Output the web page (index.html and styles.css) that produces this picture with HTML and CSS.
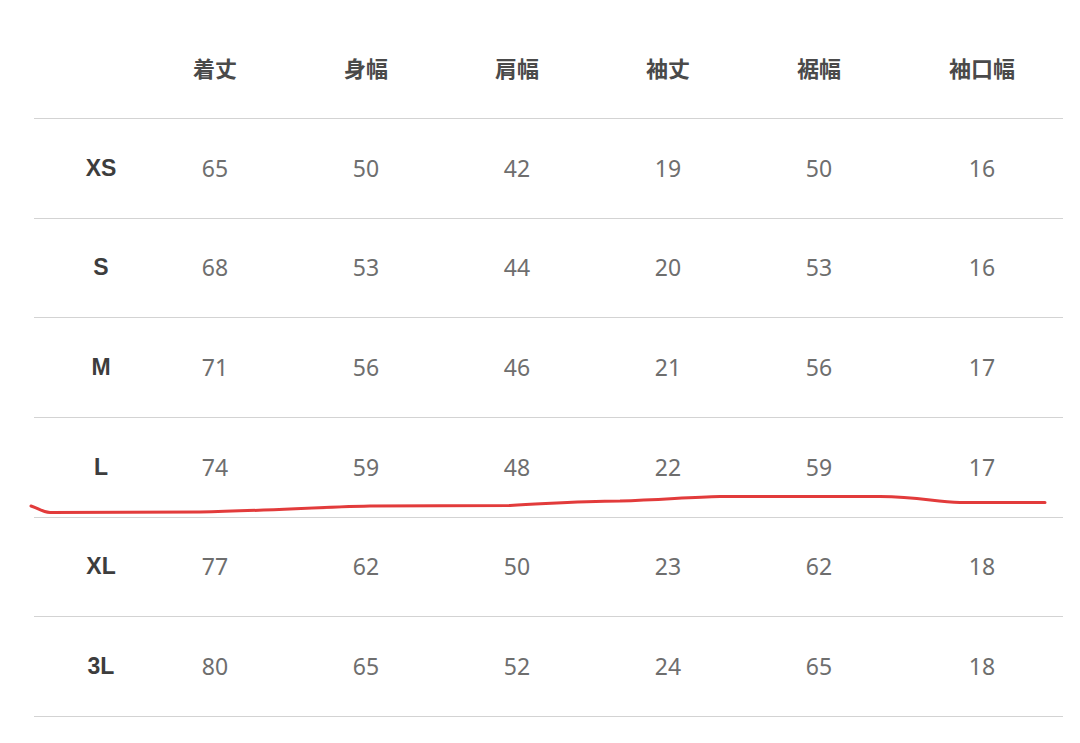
FILE: index.html
```html
<!DOCTYPE html>
<html lang="ja">
<head>
<meta charset="utf-8">
<title>サイズ表</title>
<link rel="stylesheet" href="styles.css">
</head>
<body>
<div class="page">
  <div class="table">
    <div class="row head">
      <div class="cell"></div>
      <div class="cell">着丈</div>
      <div class="cell">身幅</div>
      <div class="cell">肩幅</div>
      <div class="cell">袖丈</div>
      <div class="cell">裾幅</div>
      <div class="cell">袖口幅</div>
    </div>
    <div class="row">
      <div class="cell size">XS</div>
      <div class="cell">65</div><div class="cell">50</div><div class="cell">42</div><div class="cell">19</div><div class="cell">50</div><div class="cell">16</div>
    </div>
    <div class="row">
      <div class="cell size">S</div>
      <div class="cell">68</div><div class="cell">53</div><div class="cell">44</div><div class="cell">20</div><div class="cell">53</div><div class="cell">16</div>
    </div>
    <div class="row">
      <div class="cell size">M</div>
      <div class="cell">71</div><div class="cell">56</div><div class="cell">46</div><div class="cell">21</div><div class="cell">56</div><div class="cell">17</div>
    </div>
    <div class="row">
      <div class="cell size">L</div>
      <div class="cell">74</div><div class="cell">59</div><div class="cell">48</div><div class="cell">22</div><div class="cell">59</div><div class="cell">17</div>
    </div>
    <div class="row">
      <div class="cell size">XL</div>
      <div class="cell">77</div><div class="cell">62</div><div class="cell">50</div><div class="cell">23</div><div class="cell">62</div><div class="cell">18</div>
    </div>
    <div class="row">
      <div class="cell size">3L</div>
      <div class="cell">80</div><div class="cell">65</div><div class="cell">52</div><div class="cell">24</div><div class="cell">65</div><div class="cell">18</div>
    </div>
  </div>
  <svg class="mark" width="1080" height="743" viewBox="0 0 1080 743" aria-hidden="true">
    <path d="M31 506 C38 508 42 512 50 512.5 L200 512 C260 511 320 507 370 506 L510 505.5 C560 503 580 501 620 501 C660 500 690 497 720 496.5 L880 496.5 C920 497 935 502 960 502.5 L1045 502.5" fill="none" stroke="#e23b3b" stroke-width="3" stroke-linecap="round" stroke-linejoin="round"/>
  </svg>
</div>
</body>
</html>
```
FILE: styles.css
```css
html, body {
  margin: 0;
  padding: 0;
  background: #ffffff;
}
.page {
  position: relative;
  width: 1080px;
  height: 743px;
  overflow: hidden;
}
.table {
  padding: 20px 17px 0 34px;
}
.row {
  display: grid;
  grid-template-columns: 117px 114px repeat(4, 151px) 163px;
  align-items: center;
  height: 98.67px;
  border-bottom: 1px solid #d3d3d3;
  font-family: "Noto Sans", "Noto Sans CJK JP", sans-serif;
  font-size: 23px;
  color: #6e6e6e;
}
.row.head {
  height: 99px;
  padding-bottom: 4px;
  box-sizing: border-box;
  font-family: "Noto Sans CJK JP", sans-serif;
  font-weight: 700;
  font-size: 22px;
  color: #4a4a4a;
}
.cell {
  justify-self: end;
  width: 100px;
  text-align: center;
  line-height: 1;
}
.cell.size {
  font-family: "Liberation Sans", Arial, sans-serif;
  font-weight: 700;
  font-size: 23px;
  color: #3d3d3d;
}
.mark {
  position: absolute;
  left: 0;
  top: 0;
  pointer-events: none;
}
```
